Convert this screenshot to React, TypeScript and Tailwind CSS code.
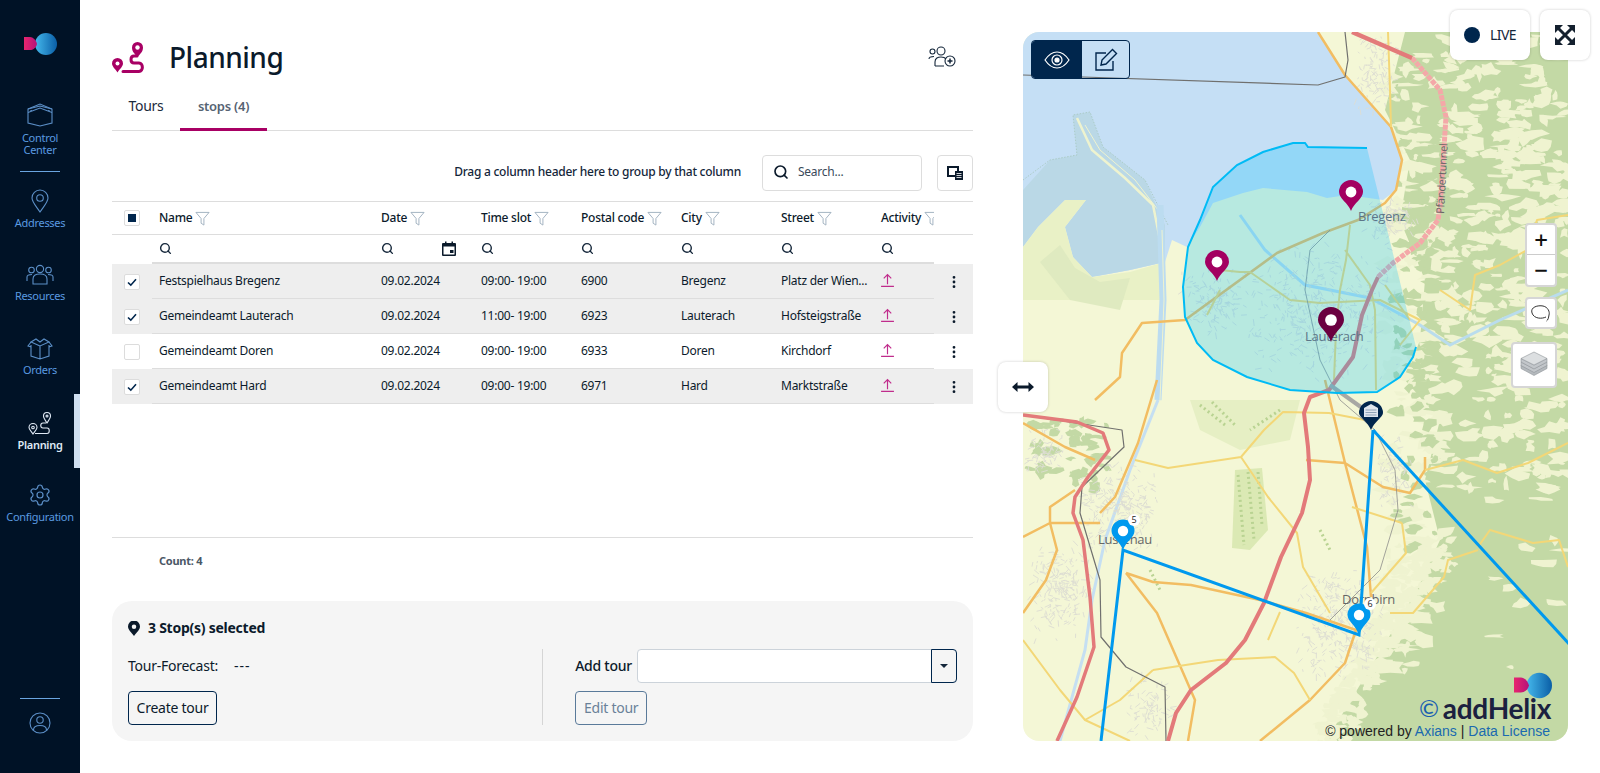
import { EllipsisVertical, Search, Settings } from "lucide-react";

const navy = "#00264d";

const COLUMNS = ["Name", "Date", "Time slot", "Postal code", "City", "Street", "Activity"];

const ROWS = [
  { name: "Festspielhaus Bregenz", slot: "09:00- 19:00", zip: "6900", city: "Bregenz", street: "Platz der Wien...", checked: true },
  { name: "Gemeindeamt Lauterach", slot: "11:00- 19:00", zip: "6923", city: "Lauterach", street: "Hofsteigstraße", checked: true },
  { name: "Gemeindeamt Doren", slot: "09:00- 19:00", zip: "6933", city: "Doren", street: "Kirchdorf", checked: false },
  { name: "Gemeindeamt Hard", slot: "09:00- 19:00", zip: "6971", city: "Hard", street: "Marktstraße", checked: true },
];

// small seeded generator so the map texture stays the same on every load
function makeRng(seed: number) {
  let s = seed;
  return () => {
    s = (s * 16807) % 2147483647;
    return (s - 1) / 2147483646;
  };
}

function blob(r: () => number, cx: number, cy: number, w: number, h: number) {
  const pts: string[] = [];
  const n = 8;
  for (let i = 0; i < n; i++) {
    const a = (i / n) * Math.PI * 2;
    const k = 0.4 + r() * 0.8;
    pts.push(`${(cx + Math.cos(a) * w * k).toFixed(1)} ${(cy + Math.sin(a) * h * k).toFixed(1)}`);
  }
  return "M" + pts.join("L") + "Z";
}

const rngA = makeRng(4711);
const FOREST_PATCHES: string[] = [];
for (let i = 0; i < 750; i++) {
  const x = 1385 + rngA() * 185;
  const y = 32 + rngA() * 640;
  if (y > 490 && x > 1425 && rngA() > 0.08) continue;
  FOREST_PATCHES.push(blob(rngA, x, y, 3 + rngA() * 14, 2 + rngA() * 6));
}
// soften the straight edge of the forest towards the valley
const EDGE_PATCHES: string[] = [];
for (let i = 0; i < 220; i++) {
  const t = rngA();
  const x = 1326 + t * 114 + (rngA() - 0.5) * 34;
  const y = 741 - t * 201 + (rngA() - 0.5) * 24;
  EDGE_PATCHES.push(blob(rngA, x, y, 3 + rngA() * 9, 2 + rngA() * 5));
}
const EDGE_GREEN: string[] = [];
for (let i = 0; i < 90; i++) {
  EDGE_GREEN.push(blob(rngA, 1395 + rngA() * 40, 130 + rngA() * 420, 3 + rngA() * 8, 2 + rngA() * 5));
}
const DARK_PATCHES: string[] = [];
for (let i = 0; i < 50; i++) {
  DARK_PATCHES.push(blob(rngA, 1023 + rngA() * 90, 420 + rngA() * 70, 3 + rngA() * 8, 2 + rngA() * 5));
}

const TOWNS = [
  [1392, 218, 26, 24, 120],
  [1320, 310, 85, 70, 420],
  [1215, 300, 34, 36, 140],
  [1120, 505, 40, 50, 260],
  [1060, 590, 36, 50, 220],
  [1340, 625, 46, 60, 320],
  [1375, 75, 24, 42, 120],
  [1150, 705, 28, 36, 90],
  [1045, 450, 22, 26, 80],
  [1395, 470, 18, 40, 90],
];
const rngB = makeRng(90210);
const STREETS: string[] = [];
TOWNS.forEach(([cx, cy, w, h, n]) => {
  for (let i = 0; i < n; i++) {
    const x = cx + (rngB() + rngB() - 1) * w;
    const y = cy + (rngB() + rngB() - 1) * h;
    const a = rngB() * Math.PI;
    const l = 2 + rngB() * 5;
    STREETS.push(`M${x.toFixed(1)} ${y.toFixed(1)}l${(Math.cos(a) * l).toFixed(1)} ${(Math.sin(a) * l).toFixed(1)}`);
  }
});

const ORANGE_ROADS = [
  "M1318 32L1345 75L1391 127L1402 160L1396 190L1385 203L1358 220L1323 233L1277 253L1185 320L1142 323L1122 353L1120 377L1095 400",
  "M1325 380L1345 463L1367 547L1371 597",
  "M1126 573L1153 582L1191 585L1260 600L1306 613L1356 630L1345 663L1310 700L1260 741",
  "M1425 457L1425 470L1410 493L1383 487L1345 463L1306 460",
  "M1050 523L1023 537M1050 523L1050 507L1075 490M1050 523L1100 523M1100 513L1115 497L1138 443L1157 380",
  "M1023 423L1065 447L1095 460M1126 573L1157 613L1195 700L1188 741M1023 613L1046 580L1057 550L1050 523",
];
const YELLOW_ROADS = [
  "M1425 470L1463 460L1497 473L1528 463L1568 443",
  "M1241 457L1168 468L1135 460M1241 457L1264 430L1283 412L1329 413L1365 420M1241 457L1268 497L1297 533L1303 567L1330 613",
  "M1153 670L1218 660L1275 657L1294 673L1310 700",
  "M1402 523L1352 507M1402 523L1406 553L1371 593",
  "M1478 547L1490 530L1533 543L1559 540L1568 567M1478 550L1448 560L1444 577L1413 613L1390 613",
  "M1391 127L1390 90L1388 32",
  "M1350 225L1346 260L1340 290L1336 330L1334 380",
  "M1220 270L1240 272L1250 272L1290 300L1320 303L1380 300L1420 320L1400 345",
  "M1345 250L1370 285L1375 310L1376 390M1385 285L1410 320",
  "M1440 290L1470 310L1475 275L1500 265L1527 250L1537 220L1568 215",
  "M1207 315L1220 290",
  "M1023 640L1060 690L1085 720L1130 741M1085 720L1120 700L1153 670",
  "M1268 640L1280 612",
];

function Logo({ className }: { className?: string }) {
  return (
    <svg viewBox="0 0 33 22" className={className}>
      <defs>
        <linearGradient id="logoPink" x1="0" x2="1">
          <stop offset="0" stopColor="#e8266e" />
          <stop offset="1" stopColor="#b5127a" />
        </linearGradient>
        <linearGradient id="logoBlue" x1="0" x2="1">
          <stop offset="0" stopColor="#45b8ec" />
          <stop offset="1" stopColor="#0a5ea6" />
        </linearGradient>
      </defs>
      <circle cx="22" cy="11" r="11" fill="url(#logoBlue)" />
      <path d="M0 4H6C9 4 12 7 13 11C12 15 9 17 6 17H0Z" fill="url(#logoPink)" />
    </svg>
  );
}

function Funnel() {
  return (
    <svg viewBox="0 0 16 16" className="h-[15px] w-[15px] shrink-0" fill="none" stroke="#9fb0bf" strokeWidth="1">
      <path d="M1 1.5H15L9.5 8V15L6.5 13V8Z" />
    </svg>
  );
}

function Checkbox({ mark }: { mark?: "check" | "square" }) {
  return (
    <div className="flex h-4 w-4 items-center justify-center rounded-[2px] border border-[#dcdcdc] bg-white">
      {mark === "check" && (
        <svg viewBox="0 0 12 12" className="h-3 w-3" fill="none" stroke={navy} strokeWidth="1.6">
          <path d="M2 6.5L4.8 9.2L10 3.2" />
        </svg>
      )}
      {mark === "square" && <div className="h-2 w-2 bg-[#00264d]" />}
    </div>
  );
}

function Activity() {
  return (
    <svg viewBox="0 0 12 14" className="-mt-[2px] h-[15px] w-[13px]" fill="none" stroke="#c02c8c" strokeWidth="1.1">
      <path d="M6 10.5V1.5M2.5 5L6 1.5L9.5 5M0 12.5H12" />
    </svg>
  );
}

function NavItem({ label, active, icon, className }: { label: string[]; active?: boolean; icon: React.ReactNode; className?: string }) {
  return (
    <div className={`relative flex h-[74px] flex-col items-center justify-center ${className ?? ""}`}>
      {icon}
      <div className={`mt-1 text-center text-[11px] leading-[12px] tracking-[-0.3px] ${active ? "font-semibold text-[#dfe9f5]" : "text-[#5a9ae0]"}`}>
        {label.map((l) => (
          <div key={l}>{l}</div>
        ))}
      </div>
      {active && <div className="absolute right-0 top-0 h-full w-[6px] bg-[#cfdff0]" />}
    </div>
  );
}

function Pin({ x, y, r, color, tip }: { x: number; y: number; r: number; color: string; tip: number }) {
  return (
    <g>
      <path
        d={`M${x} ${tip}C${x - 3} ${y + r * 0.9} ${x - r} ${y + r * 0.55} ${x - r} ${y}A${r} ${r} 0 1 1 ${x + r} ${y}C${x + r} ${y + r * 0.55} ${x + 3} ${y + r * 0.9} ${x} ${tip}Z`}
        fill={color}
      />
      <circle cx={x} cy={y} r={r * 0.45} fill="#fff" />
    </g>
  );
}

function MapDrawing() {
  return (
    <svg viewBox="1023 32 545 709" className="h-full w-full" style={{ fontFamily: '"Open Sans", sans-serif' }}>
      <rect x="1023" y="32" width="545" height="709" fill="#f4f7d6" />

      {/* forest */}
      <path d="M1385 110L1405 32H1568V741H1326L1383 647L1417 590L1440 540L1425 480L1440 420L1405 380L1420 340L1425 280L1400 220L1410 160Z" fill="#c3d9a5" />
      <g fill="#eff3d0">
        {FOREST_PATCHES.map((d, i) => (
          <path key={i} d={d} />
        ))}
        {EDGE_PATCHES.map((d, i) => (
          <path key={i} d={d} />
        ))}
      </g>
      <g fill="#c3d9a5">
        {EDGE_GREEN.map((d, i) => (
          <path key={i} d={d} />
        ))}
        {DARK_PATCHES.map((d, i) => (
          <path key={i} d={d} />
        ))}
      </g>

      {/* fields */}
      <path d="M1190 400L1300 400L1290 440L1240 450L1200 430Z" fill="#e6efc4" />
      <path d="M1235 470L1262 468L1268 530L1250 550L1232 548Z" fill="#dbe9b4" />
      <g fill="none" stroke="#b9d392" strokeWidth="3" strokeDasharray="2 3">
        <path d="M1238 475L1244 545M1248 472L1254 540M1258 472L1262 525" />
        <path d="M1200 405L1225 425M1212 402L1235 425M1280 410L1250 430" />
        <path d="M1150 570L1160 590M1320 530L1330 550" />
      </g>

      {/* lake */}
      <path
        d="M1023 32H1318L1345 75L1391 127L1402 160L1396 190L1383 200L1347 195L1327 198L1307 192L1263 188L1243 193L1213 203L1200 227L1187 247L1172 240L1165 262L1130 270L1092 277L1073 257L1065 227L1086 200L1065 200L1038 227L1023 247Z"
        fill="#c5dff5"
      />
      {/* Rhine delta, slightly darker inside the dykes */}
      <path
        d="M1023 190L1050 160L1077 155L1073 115L1090 112L1103 147L1145 180L1165 225L1165 262L1130 270L1092 277L1073 257L1065 227L1086 200L1065 200L1038 227L1023 247Z"
        fill="#bad8e6"
      />
      <path d="M1077 118L1092 150L1125 178L1153 205L1160 240" fill="none" stroke="#eef3cf" strokeWidth="2.5" />
      <path d="M1085 125L1100 150L1135 180L1158 210" fill="none" stroke="#eef3cf" strokeWidth="1" />
      <path d="M1023 180L1050 160L1077 155L1073 115L1090 112L1103 147L1145 180L1168 225" fill="none" stroke="#abcbc6" strokeWidth="1" strokeDasharray="1.500 1.500" />
      <path d="M1023 247L1038 227L1065 200L1086 200L1065 227L1073 257L1092 277L1130 272L1165 262L1160 300L1023 300Z" fill="#e9f1c6" />
      <path d="M1040 262L1060 245L1075 268L1100 282L1130 278L1120 310L1070 300Z" fill="#dfeac0" />

      {/* Rhine and small water */}
      <path d="M1160 205L1163 300L1158 400" fill="none" stroke="#bcdcf0" strokeWidth="7" />
      <path d="M1162 230L1164 300L1160 400" fill="none" stroke="#eef3cf" strokeWidth="1" />
      <path d="M1240 215L1265 250L1305 285L1370 298L1420 325L1450 345L1500 320L1568 290" fill="none" stroke="#b9dced" strokeWidth="3" />
      <path d="M1158 400L1130 470L1105 540L1092 600L1085 650L1060 741" fill="none" stroke="#c5dff2" strokeWidth="3" />

      {/* towns */}
      <path d={STREETS.join("")} fill="none" stroke="#dcdcd3" strokeWidth="0.900" />

      {/* roads */}
      <g fill="none" strokeLinejoin="round">
        <path d={ORANGE_ROADS.join("")} stroke="#f2bd62" strokeWidth="2.500" />
        <path d={YELLOW_ROADS.join("")} stroke="#f3d777" strokeWidth="2" />
        <path d="M1023 75L1318 85L1345 77L1348 60L1345 32M1023 415L1122 430L1124 447L1082 487L1080 513L1100 580L1101 637L1126 667L1165 687L1166 741" stroke="#70706e" strokeWidth="1.200" />
        <path d="M1330 230L1310 250L1305 290L1320 360L1340 400L1375 430L1395 470L1398 510L1380 570L1330 620" stroke="#8d8d8a" strokeWidth="0.800" />
        <path d="M1023 415L1077 422L1103 433L1109 450L1088 477L1075 497L1073 513L1083 540L1090 597L1094 647L1077 697L1057 741" stroke="#e37a7a" strokeWidth="3.500" />
        <path d="M1378 277L1372 290L1362 315L1353 357L1329 390L1310 397L1304 413L1308 447L1310 480L1302 513L1281 557L1264 603L1245 640L1226 663L1191 690L1176 713L1168 741" stroke="#e37a7a" strokeWidth="4" />
        <path d="M1378 277L1393 263L1420 243L1438 220L1440 207L1446 117L1440 90L1412 58" stroke="#f4a8a8" strokeWidth="5" strokeDasharray="5 1" />
        <path d="M1412 58L1352 32" stroke="#e37a7a" strokeWidth="4.500" />
        <path d="M1330 385L1372 415" stroke="#a8a8a4" strokeWidth="4" />
      </g>

      {/* zone */}
      <path
        d="M1367 148L1308 147L1305 143L1293 143L1263 152L1237 165L1213 187L1200 220L1188 247L1183 287L1185 317L1197 343L1213 360L1247 377L1290 390L1337 393L1377 392L1400 377L1413 357L1416 347Z"
        fill="#00bfff"
        fillOpacity="0.25"
      />
      <path
        d="M1367 148L1308 147L1305 143L1293 143L1263 152L1237 165L1213 187L1200 220L1188 247L1183 287L1185 317L1197 343L1213 360L1247 377L1290 390L1337 393L1377 392L1400 377L1413 357L1416 347"
        fill="none"
        stroke="#00bbf5"
        strokeWidth="2"
      />

      {/* city names */}
      <g fill="#5d7688" fontSize="13" fontWeight="500">
        <text x="1358" y="221">Bregenz</text>
        <text x="1305" y="341">Lauterach</text>
        <text x="1098" y="544" fill="#666">Lustenau</text>
        <text x="1342" y="604" fill="#666">Dornbirn</text>
        <text transform="translate(1444 214) rotate(-87)" fontSize="11" fill="#666">Pfändertunnel</text>
      </g>

      {/* tour lines */}
      <g stroke="#0099ee" strokeWidth="3" fill="none">
        <path d="M1373 430L1359 635L1123 550L1101 741" />
        <path d="M1373 430L1570 645" />
      </g>

      <Pin x={1351} y={192} r={12} color="#a30061" tip={211} />
      <Pin x={1217} y={262} r={12} color="#a30061" tip={281} />
      <Pin x={1331} y={320} r={13} color="#6b0040" tip={342} />

      {/* depot */}
      <path d="M1371 430C1368 422 1359 417 1359 413A12 12 0 1 1 1383 413C1383 417 1374 422 1371 430Z" fill="#00264d" />
      <path d="M1364 408L1371 404L1378 408V417H1364Z" fill="#dfe6ee" />
      <path d="M1365.500 410H1376.500M1365.500 412.500H1376.500M1365.500 415H1376.500" stroke="#8fa3b8" strokeWidth="1" />

      <Pin x={1123} y={531} r={11.500} color="#0099ee" tip={550} />
      <Pin x={1359} y={615} r={11.500} color="#0099ee" tip={635} />
      <g fontSize="9" textAnchor="middle" fill="#222">
        <circle cx="1134" cy="520" r="6" fill="#fff" />
        <text x="1134" y="523">5</text>
        <circle cx="1370" cy="604" r="6" fill="#fff" />
        <text x="1370" y="607">6</text>
      </g>
    </svg>
  );
}

export default function App() {
  return (
    <div className="relative flex h-[773px] w-[1600px] overflow-hidden bg-white tracking-[-0.25px] text-[#0b1a2b]" style={{ fontFamily: '"Noto Sans", sans-serif' }}>
      {/* Sidebar */}
      <aside className="flex w-20 shrink-0 flex-col bg-[#001226]">
        <div className="flex h-[88px] justify-center pt-[33px]">
          <Logo className="h-[22px] w-[33px]" />
        </div>
        <div className="flex h-[83px] flex-col items-center pt-[15px]">
          <svg viewBox="0 0 26 24" className="h-6 w-[26px]" fill="none" stroke="#5b8fc7" strokeWidth="1.100">
            <path d="M1 6L13 1L25 6V20L13 23L1 20Z" />
            <path d="M1 9.500L13 5L25 9.500M1 6L13 3L25 6M4 7V8M22 7V8" />
          </svg>
          <div className="mt-[5px] text-center text-[11px] leading-3 tracking-[-0.3px] text-[#5a9ae0]">
            <div>Control</div>
            <div>Center</div>
          </div>
        </div>
        <div className="mx-auto h-px w-10 bg-[#6aa5e0]" />
        <NavItem
          label={["Addresses"]}
          icon={
            <svg viewBox="0 0 18 24" className="h-6 w-[18px]" fill="none" stroke="#5b8fc7" strokeWidth="1.100">
              <path d="M9 23C5 17 1 13 1 9A8 8 0 0 1 17 9C17 13 13 17 9 23Z" />
              <circle cx="9" cy="9" r="3.300" />
            </svg>
          }
        />
        <NavItem
          label={["Resources"]}
          icon={
            <svg viewBox="0 0 28 22" className="h-[22px] w-7" fill="none" stroke="#5b8fc7" strokeWidth="1.100">
              <circle cx="14" cy="5" r="3.600" />
              <circle cx="5.500" cy="6" r="2.800" />
              <circle cx="22.500" cy="6" r="2.800" />
              <path d="M7 20V15C7 11 10 10 14 10C18 10 21 11 21 15V20H7ZM1 17V13C1 11 3 10.500 6 10.500M27 17V13C27 11 25 10.500 22 10.500" />
            </svg>
          }
        />
        <NavItem
          label={["Orders"]}
          icon={
            <svg viewBox="0 0 26 22" className="h-[22px] w-[26px]" fill="none" stroke="#5b8fc7" strokeWidth="1.100">
              <path d="M4 7V18L13 21L22 18V7M13 8V21M13 8L4 4L9 1L13 4L17 1L22 4L13 8ZM4 4L1 8L4 9M22 4L25 8L22 9" />
            </svg>
          }
        />
        <NavItem
          active
          label={["Planning"]}
          icon={
            <svg viewBox="0 0 24 24" className="h-6 w-6" fill="none" stroke="#dfe9f5" strokeWidth="1.100">
              <path d="M19 12C17 9 15.500 7 15.500 5A3.500 3.500 0 0 1 22.500 5C22.500 7 21 9 19 12Z" />
              <circle cx="19" cy="5" r="1" />
              <path d="M5 23C3 20 1 18.500 1 16.500A4 4 0 0 1 9 16.500C9 18.500 7 20 5 23Z" />
              <circle cx="5" cy="16.500" r="1.300" />
              <path d="M18 12H15C12 12 12 17 15 17H19C22 17 22 22.500 19 22.500H7" />
            </svg>
          }
        />
        <NavItem className="-mt-[2px]" label={["Configuration"]} icon={<Settings size={24} strokeWidth={1.200} color="#5b8fc7" />} />
        <div className="mx-auto mb-[13px] mt-auto h-px w-10 bg-[#6aa5e0]" />
        <div className="mb-[39px] flex justify-center">
          <svg viewBox="0 0 22 22" className="h-[22px] w-[22px]" fill="none" stroke="#5b8fc7" strokeWidth="1.100">
            <circle cx="11" cy="11" r="10" />
            <circle cx="11" cy="8" r="3.200" />
            <path d="M4.500 18C4.500 14.500 7 13.500 11 13.500C15 13.500 17.500 14.500 17.500 18" />
          </svg>
        </div>
      </aside>

      {/* Main column */}
      <main className="ml-8 flex w-[861px] shrink-0 flex-col">
        <header className="flex h-[90px] items-center justify-between pr-[17px] pt-[24px]">
          <div className="flex items-center">
            <svg viewBox="0 0 32 32" className="h-8 w-8" fill="none">
              <path d="M25.500 16C23 13 20 11 20 6.500A5.500 5.500 0 0 1 31 6.500C31 11 28 13 25.500 16Z" fill="#a80064" />
              <circle cx="25.500" cy="6.500" r="2.200" fill="#fff" />
              <path d="M5.500 31.500C3 27.500 0 25.500 0 22.500A5.500 5.500 0 0 1 11 22.500C11 25.500 8 27.500 5.500 31.500Z" fill="#a80064" />
              <circle cx="5.500" cy="22.500" r="2" fill="#fff" />
              <path d="M25 15H22C18 15 18 22 22 22H27C31.500 22 31.500 30.500 27 30.500H11" stroke="#a80064" strokeWidth="3" strokeLinecap="round" />
            </svg>
            <h1 className="ml-[25px] text-[28px] font-medium leading-none tracking-[-0.5px] text-[#0b1a2b]">Planning</h1>
          </div>
          <svg viewBox="0 0 28 22" className="h-[22px] w-7" fill="none" stroke="#14263a" strokeWidth="1.100">
            <circle cx="13" cy="5" r="4" />
            <circle cx="4.500" cy="5.500" r="2.500" />
            <path d="M1 13C1 11 3 10.500 6 10.500M7 20V16C7 12 10 11 13 11C15 11 17 11.500 18 13M7 20H16" />
            <circle cx="22" cy="15" r="5" />
            <path d="M22 12.500V17.500M19.500 15H24.500" strokeWidth="1.500" />
          </svg>
        </header>

        <nav className="flex h-[41px] border-b border-[#dddddd]">
          <div className="flex w-[68px] items-center justify-center pb-[8px] text-sm text-[#1c2b3d]">Tours</div>
          <div className="flex h-[41px] w-[87px] items-center justify-center border-b-[3px] border-[#a80064] pb-[5px] text-[13px] font-semibold text-[#566373]">stops (4)</div>
        </nav>

        <div className="flex h-[70px] items-end justify-end pb-[10px]">
          <span className="mb-[11px] mr-[21px] text-xs font-medium text-[#14263a]">Drag a column header here to group by that column</span>
          <div className="flex h-9 w-40 items-center rounded border border-[#dddddd] pb-[2px] pl-[10px] text-xs text-[#3a4a5a]">
            <Search size={16} strokeWidth={2.500} color="#0b1a2b" />
            <span className="ml-[9px]">Search...</span>
          </div>
          <div className="ml-[15px] flex h-9 w-9 items-center justify-center rounded border border-[#dddddd]">
            <svg viewBox="0 0 16 14" className="h-[14px] w-4" fill="none">
              <rect x="1" y="1" width="10" height="9" stroke="#0b1a2b" strokeWidth="2" />
              <rect x="8" y="5" width="8" height="9" fill="#0b1a2b" />
              <path d="M9.500 7.500H14.500M9.500 9.500H14.500M9.500 11.500H14.500" stroke="#fff" strokeWidth="0.800" />
            </svg>
          </div>
        </div>

        {/* Grid */}
        <div className="grid h-[34px] grid-cols-[40px_222px_100px_100px_100px_100px_100px_60px_39px] items-center border-y border-[#dddddd] text-xs font-medium">
          <div className="flex justify-center"><Checkbox mark="square" /></div>
          {COLUMNS.map((c) => (
            <div key={c} className={`flex items-center gap-[3px] overflow-hidden pl-[7px] ${c === "Activity" ? "pr-3" : ""}`}>
              <span className="whitespace-nowrap">{c}</span>
              <Funnel />
            </div>
          ))}
        </div>
        <div className="grid h-[29px] grid-cols-[40px_222px_100px_100px_100px_100px_100px_60px_39px]">
          <div />
          {COLUMNS.map((c) => (
            <div key={c} className="flex items-center justify-between border-b-2 border-[#dddddd] pl-[7px] pr-[18px]">
              <Search size={13} strokeWidth={2.600} color="#14263a" />
              {c === "Date" && (
                <svg viewBox="0 0 14 15" className="h-[15px] w-[14px]">
                  <path d="M1 2H3V0.500H4.500V2H9.500V0.500H11V2H13A1 1 0 0 1 14 3V14A1 1 0 0 1 13 15H1A1 1 0 0 1 0 14V3A1 1 0 0 1 1 2ZM1.500 5.500V13.500H12.500V5.500ZM8 9H11.500V12H8Z" fill="#0b1a2b" fillRule="evenodd" />
                </svg>
              )}
            </div>
          ))}
        </div>
        {ROWS.map((r) => (
          <div key={r.name} className={`grid h-[35px] grid-cols-[40px_222px_100px_100px_100px_100px_100px_60px_39px] items-center text-xs ${r.checked ? "bg-[#eeeeee]" : "bg-white"}`}>
            <div className="flex justify-center"><Checkbox mark={r.checked ? "check" : undefined} /></div>
            <div className="flex h-full items-center border-b border-[#dddddd] pl-[7px]">{r.name}</div>
            <div className="flex h-full items-center border-b border-[#dddddd] pl-[7px]">09.02.2024</div>
            <div className="flex h-full items-center border-b border-[#dddddd] pl-[7px]">{r.slot}</div>
            <div className="flex h-full items-center border-b border-[#dddddd] pl-[7px]">{r.zip}</div>
            <div className="flex h-full items-center border-b border-[#dddddd] pl-[7px]">{r.city}</div>
            <div className="flex h-full items-center whitespace-nowrap border-b border-[#dddddd] pl-[7px]">{r.street}</div>
            <div className="flex h-full items-center border-b border-[#dddddd] pl-[7px]"><Activity /></div>
            <div className="flex h-full items-center justify-center pl-[1px]"><EllipsisVertical size={16} strokeWidth={2.200} color="#0b1a2b" /></div>
          </div>
        ))}

        <div className="mt-[133px] flex h-[47px] items-center border-t border-[#dddddd] pl-[47px] text-[11px] font-bold text-[#4a5766]">Count: 4</div>

        {/* Selection panel */}
        <section className="mt-[17px] flex h-[140px] rounded-[20px] bg-[#f5f5f5] px-4">
          <div className="flex w-[417px] flex-col pt-[17px]">
            <div className="flex h-5 items-center whitespace-nowrap text-sm font-bold text-[#0b1a2b]">
              <svg viewBox="0 0 12 15" className="mr-2 h-[15px] w-3">
                <path d="M6 15C3 11 0 8.500 0 5.500A6 6 0 0 1 12 5.500C12 8.500 9 11 6 15ZM6 3.500A2.200 2.200 0 1 0 6 8A2.200 2.200 0 0 0 6 3.500Z" fill="#0b1a2b" fillRule="evenodd" />
              </svg>
              3 Stop(s) selected
            </div>
            <div className="mt-[11px] flex h-[34px] items-center text-sm">
              <span>Tour-Forecast:</span>
              <span className="ml-[16px] tracking-[1px]">---</span>
            </div>
            <div className="mt-2 flex h-[34px] w-[89px] items-center justify-center rounded border border-[#00264d] text-sm">Create tour</div>
          </div>
          <div className="mt-[48px] h-[76px] w-px bg-[#d5d5d5]" />
          <div className="ml-8 mt-[48px] flex h-[76px] flex-col">
            <div className="flex h-[34px] items-center">
              <span className="whitespace-nowrap text-sm font-medium">Add tour</span>
              <div className="ml-[5px] flex h-[34px] w-[320px] rounded border border-[#ccd3da] bg-white">
                <div className="flex-1" />
                <div className="-my-px -mr-px flex w-[26px] items-center justify-center rounded-r border border-[#00264d] bg-[#f5f5f5]">
                  <div className="h-0 w-0 border-x-[4px] border-t-[4px] border-x-transparent border-t-[#14263a]" />
                </div>
              </div>
            </div>
            <div className="mt-2 flex h-[34px] w-[72px] items-center justify-center rounded border border-[#5a7a9a] text-sm text-[#6a8199]">Edit tour</div>
          </div>
        </section>
      </main>

      {/* Map */}
      <div className="relative ml-[50px] mt-8 h-[709px] w-[545px] shrink-0 overflow-hidden rounded-2xl">
        <MapDrawing />

        <div className="absolute left-2 top-2 flex h-[39px] w-[99px] overflow-hidden rounded border border-[#00264d]">
          <div className="flex w-[50px] items-center justify-center bg-[#00264d]">
            <svg viewBox="0 0 26 18" className="h-[18px] w-[26px]" fill="none" stroke="#fff" strokeWidth="1.200">
              <path d="M1 9C5 3 9 1 13 1C17 1 21 3 25 9C21 15 17 17 13 17C9 17 5 15 1 9Z" />
              <circle cx="13" cy="9" r="5" />
              <circle cx="13" cy="9" r="2" fill="#fff" />
            </svg>
          </div>
          <div className="flex flex-1 items-center justify-center">
            <svg viewBox="0 0 24 24" className="h-6 w-6" fill="none" stroke="#00264d" strokeWidth="1.400">
              <path d="M19 13V22H2V5H12" />
              <path d="M8 12L18.500 1.500L22.500 5.500L12 16L7 17Z" />
            </svg>
          </div>
        </div>

        <div className="absolute right-[11px] top-[191px] w-8 overflow-hidden rounded-sm border-2 border-[#d6d6d6] bg-white text-[#111]">
          <div className="flex h-[30px] items-center justify-center border-b border-[#cccccc] text-2xl font-medium leading-none">+</div>
          <div className="flex h-[30px] items-center justify-center text-2xl font-medium leading-none">−</div>
        </div>
        <div className="absolute right-[11px] top-[265px] flex h-8 w-8 items-center justify-center rounded-sm border-2 border-[#d6d6d6] bg-white">
          <svg viewBox="0 0 22 20" className="h-5 w-[22px]" fill="none" stroke="#333" strokeWidth="1">
            <path d="M16 14C12 16 4 16 2 10C0 4 8 2 13 3C18 4 20 9 19 12C18.500 15 18 17 16.500 18" />
          </svg>
        </div>
        <div className="absolute right-[11px] top-[310px] flex h-[46px] w-[46px] items-center justify-center rounded-sm border-2 border-[#d6d6d6] bg-white">
          <svg viewBox="0 0 28 28" className="h-7 w-7" fill="#c2c6ca" stroke="#8e9499" strokeWidth="0.600">
            <path d="M14 20.500L1 14V17.500L14 24.500L27 17.500V14Z" fill="#b4b9bd" />
            <path d="M14 17.500L1 11V14.500L14 21.500L27 14.500V11Z" />
            <path d="M14 14L1 7.500V11L14 18L27 11V7.500Z" />
            <path d="M14 1L1 7.500L14 14L27 7.500Z" fill="#dcdfe1" />
          </svg>
        </div>

        <div className="absolute bottom-[42px] right-[16px]">
          <Logo className="h-[27px] w-[38px]" />
        </div>
        <div className="absolute bottom-[19px] right-[17px] flex items-center text-[#1b2140]" style={{ fontFamily: "Lato, sans-serif" }}>
          <span className="mr-[4px] text-[24px] leading-none text-[#1a5fb0]">©</span>
          <span className="text-[28px] font-bold leading-none tracking-[-0.3px]">addHelix</span>
        </div>
        <div className="absolute bottom-[2px] right-[18px] whitespace-nowrap text-sm leading-4 tracking-normal text-[#222]" style={{ fontFamily: '"Liberation Sans", sans-serif' }}>
          © powered by <span className="text-[#1a6ab0]">Axians</span> | <span className="text-[#1a6ab0]">Data License</span>
        </div>
      </div>

      {/* Floating controls */}
      <div className="absolute left-[998px] top-[362px] flex h-[50px] w-[50px] items-center justify-center rounded-lg bg-white shadow-[0_0_3px_rgba(0,0,0,0.2)]">
        <svg viewBox="0 0 22 12" className="h-3 w-[22px]" fill="#0b1a2b">
          <path d="M0 6L5.500 1V4.500H16.500V1L22 6L16.500 11V7.500H5.500V11Z" />
        </svg>
      </div>
      <div className="absolute left-[1450px] top-[10px] flex h-[50px] w-[80px] items-center justify-center rounded-lg bg-white shadow-[0_0_3px_rgba(0,0,0,0.2)]">
        <div className="h-4 w-4 rounded-full bg-[#00264d]" />
        <span className="ml-[10px] text-sm tracking-[-0.6px] text-[#14263a]">LIVE</span>
      </div>
      <div className="absolute left-[1540px] top-[10px] flex h-[50px] w-[50px] items-center justify-center rounded-lg bg-white shadow-[0_0_3px_rgba(0,0,0,0.2)]">
        <svg viewBox="0 0 20 20" className="h-5 w-5" fill="#14202e" stroke="#14202e">
          <path d="M3 3L17 17M17 3L3 17" strokeWidth="3" />
          <path d="M0 0H8L0 8ZM20 0V8L12 0ZM20 20H12L20 12ZM0 20V12L8 20Z" stroke="none" />
        </svg>
      </div>
    </div>
  );
}
